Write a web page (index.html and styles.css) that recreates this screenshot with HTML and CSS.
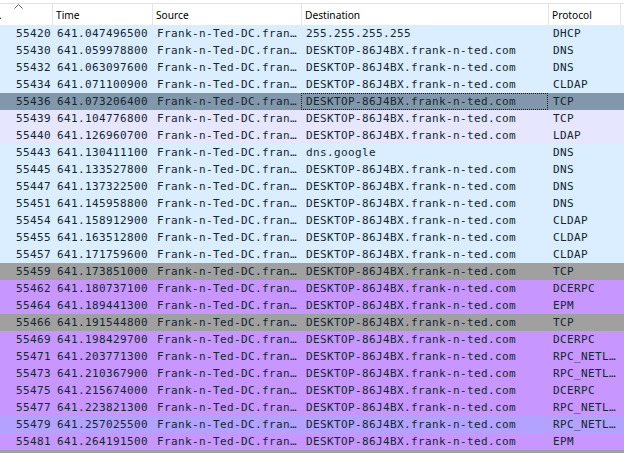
FILE: index.html
```html
<!DOCTYPE html>
<html>
<head>
<meta charset="utf-8">
<link rel="stylesheet" href="styles.css">
</head>
<body>
<div class="list">
  <div class="head">
    <div class="hc hc-no"><span class="dot">.</span><svg class="sort" width="9" height="5" viewBox="0 0 9 5"><path d="M0.5 4.5 L4.5 0.5 L8.5 4.5" fill="none" stroke="#606060" stroke-width="1"/></svg></div>
    <div class="hc">Time</div>
    <div class="hc">Source</div>
    <div class="hc">Destination</div>
    <div class="hc">Protocol</div>
    <div class="hc hc-last"></div>
  </div>
  <div class="rows">
    <div class="row udp"><span class="no">55420</span><span>641.047496500</span><span>Frank-n-Ted-DC.fran…</span><span>255.255.255.255</span><span>DHCP</span><span></span></div>
    <div class="row udp"><span class="no">55430</span><span>641.059978800</span><span>Frank-n-Ted-DC.fran…</span><span>DESKTOP-86J4BX.frank-n-ted.com</span><span>DNS</span><span></span></div>
    <div class="row udp"><span class="no">55432</span><span>641.063097600</span><span>Frank-n-Ted-DC.fran…</span><span>DESKTOP-86J4BX.frank-n-ted.com</span><span>DNS</span><span></span></div>
    <div class="row udp"><span class="no">55434</span><span>641.071100900</span><span>Frank-n-Ted-DC.fran…</span><span>DESKTOP-86J4BX.frank-n-ted.com</span><span>CLDAP</span><span></span></div>
    <div class="row sel"><span class="no">55436</span><span>641.073206400</span><span>Frank-n-Ted-DC.fran…</span><span class="focus">DESKTOP-86J4BX.frank-n-ted.com</span><span>TCP</span><span></span></div>
    <div class="row tcp"><span class="no">55439</span><span>641.104776800</span><span>Frank-n-Ted-DC.fran…</span><span>DESKTOP-86J4BX.frank-n-ted.com</span><span>TCP</span><span></span></div>
    <div class="row tcp"><span class="no">55440</span><span>641.126960700</span><span>Frank-n-Ted-DC.fran…</span><span>DESKTOP-86J4BX.frank-n-ted.com</span><span>LDAP</span><span></span></div>
    <div class="row udp"><span class="no">55443</span><span>641.130411100</span><span>Frank-n-Ted-DC.fran…</span><span>dns.google</span><span>DNS</span><span></span></div>
    <div class="row udp"><span class="no">55445</span><span>641.133527800</span><span>Frank-n-Ted-DC.fran…</span><span>DESKTOP-86J4BX.frank-n-ted.com</span><span>DNS</span><span></span></div>
    <div class="row udp"><span class="no">55447</span><span>641.137322500</span><span>Frank-n-Ted-DC.fran…</span><span>DESKTOP-86J4BX.frank-n-ted.com</span><span>DNS</span><span></span></div>
    <div class="row udp"><span class="no">55451</span><span>641.145958800</span><span>Frank-n-Ted-DC.fran…</span><span>DESKTOP-86J4BX.frank-n-ted.com</span><span>DNS</span><span></span></div>
    <div class="row udp"><span class="no">55454</span><span>641.158912900</span><span>Frank-n-Ted-DC.fran…</span><span>DESKTOP-86J4BX.frank-n-ted.com</span><span>CLDAP</span><span></span></div>
    <div class="row udp"><span class="no">55455</span><span>641.163512800</span><span>Frank-n-Ted-DC.fran…</span><span>DESKTOP-86J4BX.frank-n-ted.com</span><span>CLDAP</span><span></span></div>
    <div class="row udp"><span class="no">55457</span><span>641.171759600</span><span>Frank-n-Ted-DC.fran…</span><span>DESKTOP-86J4BX.frank-n-ted.com</span><span>CLDAP</span><span></span></div>
    <div class="row syn"><span class="no">55459</span><span>641.173851000</span><span>Frank-n-Ted-DC.fran…</span><span>DESKTOP-86J4BX.frank-n-ted.com</span><span>TCP</span><span></span></div>
    <div class="row rpc"><span class="no">55462</span><span>641.180737100</span><span>Frank-n-Ted-DC.fran…</span><span>DESKTOP-86J4BX.frank-n-ted.com</span><span>DCERPC</span><span></span></div>
    <div class="row rpc"><span class="no">55464</span><span>641.189441300</span><span>Frank-n-Ted-DC.fran…</span><span>DESKTOP-86J4BX.frank-n-ted.com</span><span>EPM</span><span></span></div>
    <div class="row syn"><span class="no">55466</span><span>641.191544800</span><span>Frank-n-Ted-DC.fran…</span><span>DESKTOP-86J4BX.frank-n-ted.com</span><span>TCP</span><span></span></div>
    <div class="row rpc"><span class="no">55469</span><span>641.198429700</span><span>Frank-n-Ted-DC.fran…</span><span>DESKTOP-86J4BX.frank-n-ted.com</span><span>DCERPC</span><span></span></div>
    <div class="row rpc"><span class="no">55471</span><span>641.203771300</span><span>Frank-n-Ted-DC.fran…</span><span>DESKTOP-86J4BX.frank-n-ted.com</span><span>RPC_NETL…</span><span></span></div>
    <div class="row rpc"><span class="no">55473</span><span>641.210367900</span><span>Frank-n-Ted-DC.fran…</span><span>DESKTOP-86J4BX.frank-n-ted.com</span><span>RPC_NETL…</span><span></span></div>
    <div class="row rpc"><span class="no">55475</span><span>641.215674000</span><span>Frank-n-Ted-DC.fran…</span><span>DESKTOP-86J4BX.frank-n-ted.com</span><span>DCERPC</span><span></span></div>
    <div class="row rpc"><span class="no">55477</span><span>641.223821300</span><span>Frank-n-Ted-DC.fran…</span><span>DESKTOP-86J4BX.frank-n-ted.com</span><span>RPC_NETL…</span><span></span></div>
    <div class="row hover"><span class="no">55479</span><span>641.257025500</span><span>Frank-n-Ted-DC.fran…</span><span>DESKTOP-86J4BX.frank-n-ted.com</span><span>RPC_NETL…</span><span></span></div>
    <div class="row rpc"><span class="no">55481</span><span>641.264191500</span><span>Frank-n-Ted-DC.fran…</span><span>DESKTOP-86J4BX.frank-n-ted.com</span><span>EPM</span><span></span></div>
    <div class="row syn"></div>
  </div>
</div>
</body>
</html>
```
FILE: styles.css
```css
html, body {
  margin: 0;
  padding: 0;
  background: #ffffff;
  overflow: hidden;
  width: 624px;
  height: 453px;
}

.list {
  width: 624px;
  height: 453px;
  overflow: hidden;
}

.head {
  display: grid;
  grid-template-columns: 52px 100px 149px 247px 72px 1fr;
  height: 21px;
  margin-top: 3px;
  border-top: 1px solid #e3e3e3;
  background: #ffffff;
  font-family: "Noto Sans", "Open Sans", sans-serif;
  font-size: 10.2px;
  color: #000000;
}

.hc {
  position: relative;
  border-left: 1px solid #e5e5e5;
  padding-left: 3px;
  padding-top: 1px;
  line-height: 20px;
  white-space: nowrap;
  overflow: hidden;
}

.hc-no {
  border-left: none;
  padding-left: 0;
}

.dot {
  display: inline-block;
  margin-left: -1px;
}

.sort {
  position: absolute;
  left: 14px;
  top: 0px;
}

.rows {
  font-family: "DejaVu Sans Mono", "Liberation Mono", monospace;
  font-size: 11px;
  letter-spacing: 0.38px;
  color: #12272e;
}

.row {
  display: grid;
  grid-template-columns: 52px 100px 149px 247px 72px 1fr;
  height: 17px;
  line-height: 17px;
  white-space: nowrap;
}

.row > span {
  overflow: hidden;
  padding-left: 5px;
}

.row > span.no {
  padding-left: 0;
  padding-right: 1px;
  text-align: right;
}

.udp { background: #daeeff; }
.tcp { background: #e7e6ff; }
.syn { background: #a0a0a0; }
.rpc { background: #c797ff; }
.hover { background: #b3a2ff; }
.sel { background: #8397ac; }

.focus {
  outline: 1px dotted #1a1a1a;
  outline-offset: -1px;
}
```
